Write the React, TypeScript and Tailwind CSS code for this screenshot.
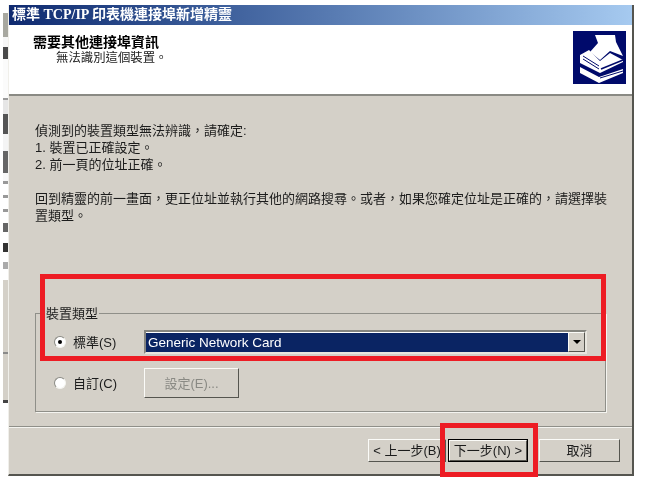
const cjk = "font-['Liberation_Sans','Noto_Sans_CJK_TC',sans-serif]"

// slivers of the window hidden behind the wizard, top to bottom
const behind = [
  { h: 13, c: "bg-[#ffffff]" },
  { h: 24, c: "bg-[#a8a8a0]" },
  { h: 10, c: "bg-[#f6f6f6]" },
  { h: 12, c: "bg-[#4a4a4a]" },
  { h: 39, c: "bg-[#fbfbfb]" },
  { h: 2, c: "bg-[#9a9a9a]" },
  { h: 14, c: "bg-[#e6e6e6]" },
  { h: 20, c: "bg-[#555555]" },
  { h: 17, c: "bg-[#f4f4f4]" },
  { h: 22, c: "bg-[#666666]" },
  { h: 8, c: "bg-[#f8f8f8]" },
  { h: 3, c: "bg-[#999999]" },
  { h: 11, c: "bg-[#ffffff]" },
  { h: 3, c: "bg-[#999999]" },
  { h: 11, c: "bg-[#ffffff]" },
  { h: 3, c: "bg-[#999999]" },
  { h: 11, c: "bg-[#ffffff]" },
  { h: 9, c: "bg-[#666666]" },
  { h: 11, c: "bg-[#ffffff]" },
  { h: 9, c: "bg-[#333333]" },
  { h: 10, c: "bg-[#ffffff]" },
  { h: 7, c: "bg-[#aaaaaa]" },
  { h: 11, c: "bg-[#ffffff]" },
  { h: 72, c: "bg-[#d4d0c8]" },
  { h: 2, c: "bg-[#8a8a8a]" },
  { h: 46, c: "bg-[#d4d0c8]" },
  { h: 3, c: "bg-[#444444]" },
]

function Radio({ checked }: { checked?: boolean }) {
  return (
    <span className="flex h-[12px] w-[12px] items-center justify-center rounded-full border border-[#8a8a84] border-b-[#f4f4f0] border-r-[#f4f4f0] bg-white">
      {checked && <span className="h-[4px] w-[4px] rounded-full bg-black" />}
    </span>
  )
}

function WinButton({ label, className }: { label: string; className: string }) {
  return (
    <div
      className={`flex items-center justify-center border border-[#fbfbf8] border-r-[#55554f] border-b-[#55554f] bg-[#d4d0c8] text-[13px] ${className}`}
    >
      {label}
    </div>
  )
}

function PrinterIcon() {
  return (
    <svg viewBox="0 0 53 53" className="h-[53px] w-[53px] shrink-0">
      <rect width="53" height="53" fill="#000a6b" />
      <path d="M22 4h20l1 7 7 14-13-5-10 9-10-8 8-9z" fill="#fff" />
      <path d="M7 24l9-5 11 11 10-8 13 7v2L27 42 7 32z" fill="#fff" />
      <path d="M10 25l16 10M10 28l16 10" stroke="#000a6b" strokeWidth="1" />
      <path d="M28 38l22-9" stroke="#000a6b" strokeWidth="1.5" />
      <path d="M7 36l19 10 24-8v4L26 52 7 42z" fill="#fff" />
      <path d="M27 47l23-7" stroke="#000a6b" strokeWidth="1" />
    </svg>
  )
}

export default function App() {
  return (
    <div className={`relative flex h-[491px] w-[657px] overflow-hidden bg-white text-[#1c1c1c] blur-[0.4px] ${cjk}`}>
      <div className="ml-[3px] flex w-[5px] shrink-0 flex-col">
        {behind.map((b, i) => (
          <div key={i} className={b.c} style={{ height: b.h }} />
        ))}
      </div>

      {/* wizard window */}
      <div className="mt-[5px] flex h-[471px] w-[626px] flex-col border-r-2 border-b-2 border-l border-[#55554f] border-l-[#f0efea] bg-[#d4d0c8]">
        <div className="flex h-[20px] shrink-0 items-center bg-gradient-to-r from-[#0f2a70] to-[#a6caf0] pl-[3px] font-['Liberation_Serif','Noto_Sans_CJK_TC',serif] text-[14px] font-bold leading-none text-white">
          標準 TCP/IP 印表機連接埠新增精靈
        </div>

        <div className="flex h-[71px] shrink-0 border-b-2 border-[#8a8a84] bg-white pt-[6px] pr-[6px] pl-[24px]">
          <div className="flex-1">
            <div className="pt-[3px] text-[14px] leading-[17px] font-bold text-black">需要其他連接埠資訊</div>
            <div className="pl-[23px] text-[12.4px] leading-[15px]">無法識別這個裝置。</div>
          </div>
          <PrinterIcon />
        </div>

        <div className="flex flex-1 flex-col pt-[26px] pl-[26px] text-[13px] leading-[17px]">
          <p>{"偵測到的裝置類型無法辨識\uFF0C請確定:"}</p>
          <p>1. 裝置已正確設定。</p>
          <p>2. 前一頁的位址正確。</p>
          <p className="mt-[17px] w-[576px]">
            {"回到精靈的前一畫面\uFF0C更正位址並執行其他的網路搜尋。或者\uFF0C如果您確定位址是正確的\uFF0C請選擇裝置類型。"}
          </p>

          {/* device type group */}
          <div className="mt-[89px] h-[99px] w-[571px] border border-[#8f8f89] shadow-[1px_1px_0_#f4f4f0]">
            <div className="-mt-[8px] ml-[9px] w-fit bg-[#d4d0c8] px-[1px] leading-[16px]">裝置類型</div>
            <div className="mt-[8px] flex h-[24px] items-center pl-[18px]">
              <Radio checked />
              <span className="ml-[7px] w-[71px]">標準(S)</span>
              <div className="flex h-[24px] w-[443px] items-center border-2 border-[#85857f] border-r-[#e8e6df] border-b-[#e8e6df] bg-white">
                <div className="flex h-[19px] flex-1 items-center bg-[#0a2463] pl-[2px] text-[13.5px] text-white">
                  Generic Network Card
                </div>
                <div className="flex h-[20px] w-[17px] items-center justify-center border border-[#fbfbf8] border-r-[#55554f] border-b-[#55554f] bg-[#d4d0c8]">
                  <span className="h-0 w-0 border-x-[4px] border-t-[4px] border-x-transparent border-t-black" />
                </div>
              </div>
            </div>
            <div className="mt-[14px] flex h-[30px] items-center pl-[18px]">
              <Radio />
              <span className="ml-[7px] w-[71px]">自訂(C)</span>
              <WinButton label="設定(E)..." className="h-[30px] w-[95px] text-[#8a8a84]" />
            </div>
          </div>
        </div>

        <div className="flex h-[48px] shrink-0 items-start justify-end border-t border-[#8f8f89] pt-[12px] pr-[12px] shadow-[inset_0_1px_0_#f4f4f0]">
          <WinButton label="< 上一步(B)" className="h-[23px] w-[78px]" />
          <div className="ml-[2px] border border-black">
            <WinButton label="下一步(N) >" className="h-[21px] w-[78px]" />
          </div>
          <WinButton label="取消" className="ml-[11px] h-[23px] w-[81px]" />
        </div>
      </div>

      {/* red annotation boxes */}
      <div className="absolute top-[274px] left-[40px] h-[87px] w-[566px] border-[5px] border-[#ed1c24]" />
      <div className="absolute top-[423px] left-[440px] h-[54px] w-[98px] border-[5px] border-[#ed1c24]" />
    </div>
  )
}
